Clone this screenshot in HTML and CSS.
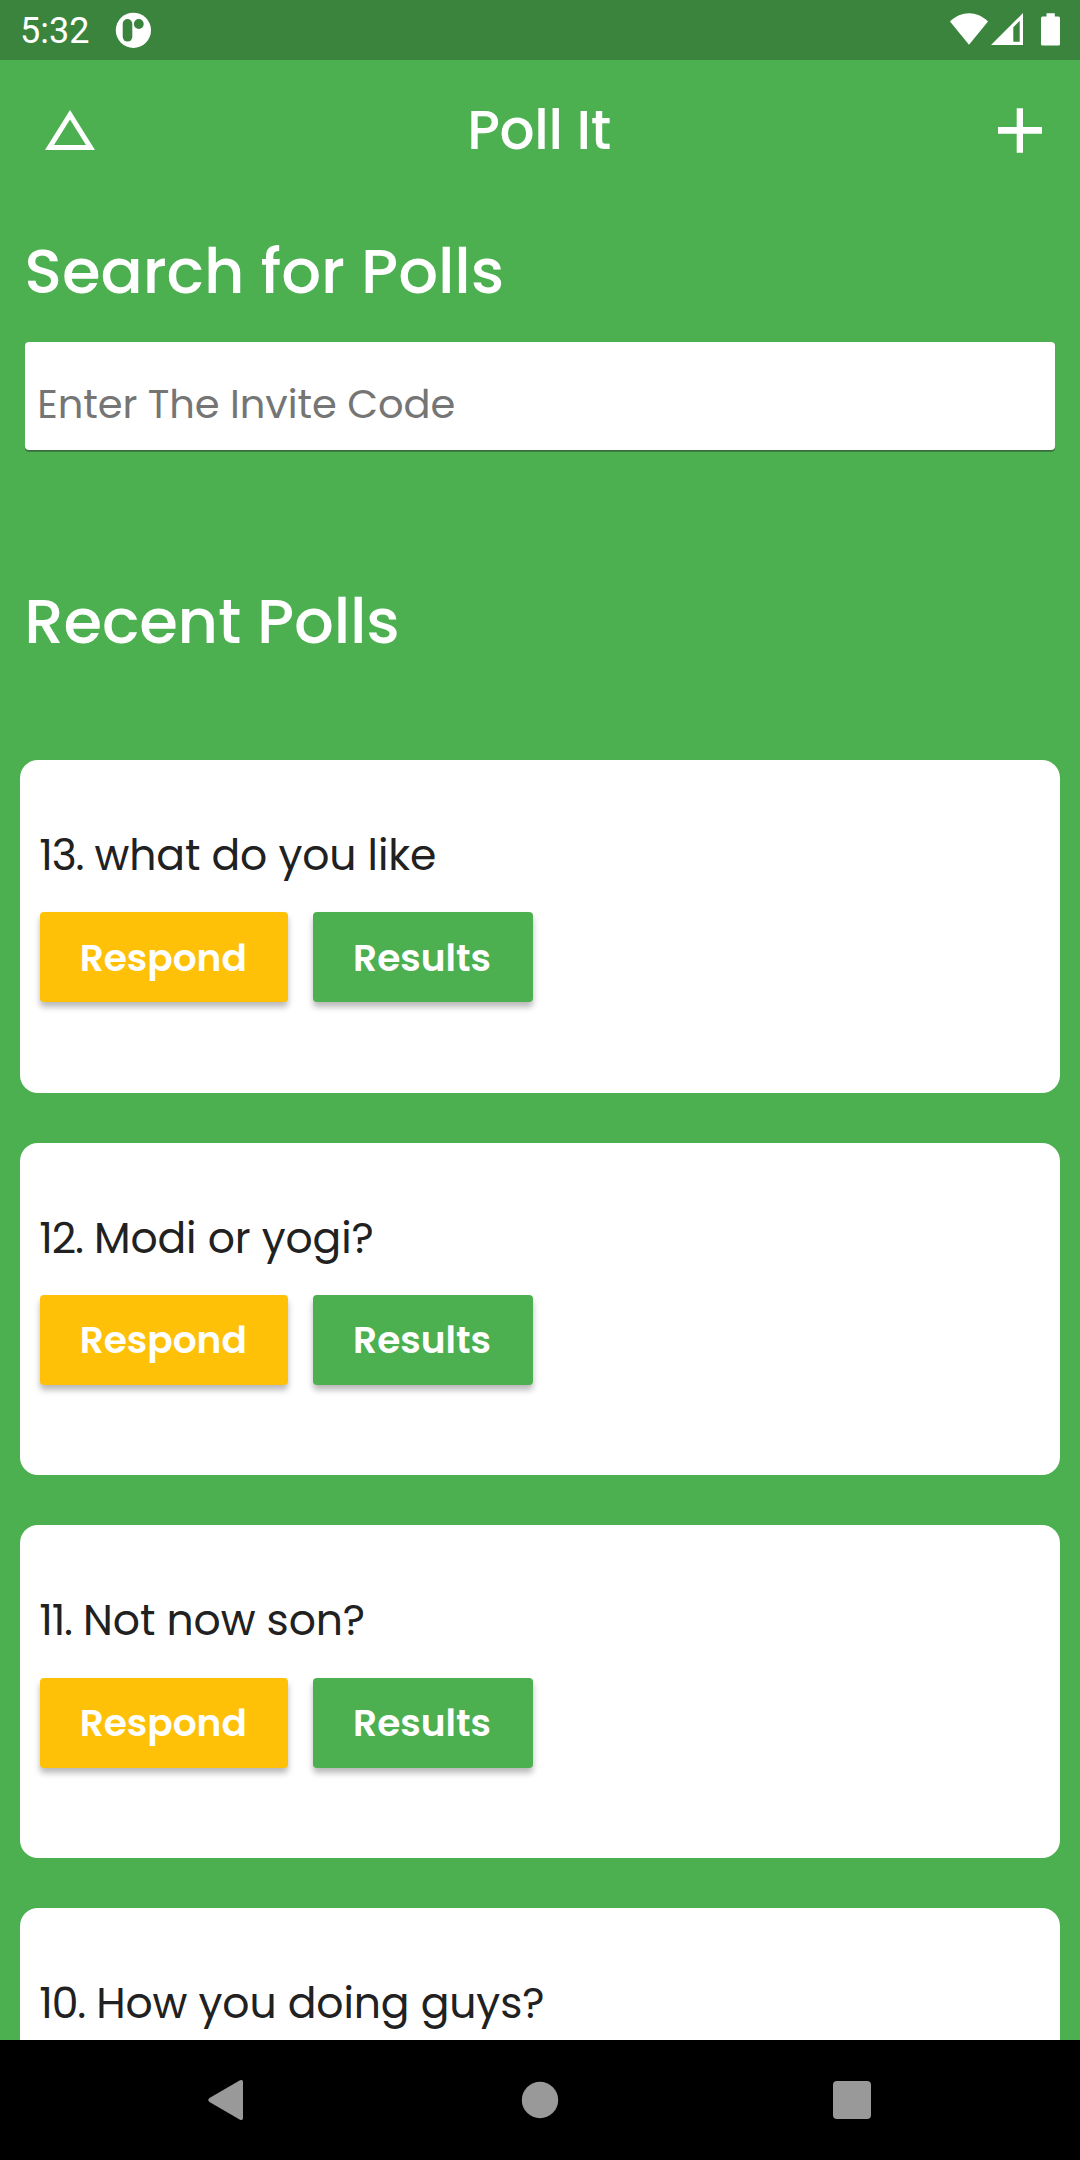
FILE: index.html
```html
<!DOCTYPE html>
<html lang="en">
<head>
<meta charset="utf-8">
<title>Poll It</title>
<link rel="stylesheet" href="styles.css">
</head>
<body>
<header class="status">
  <span class="clock">5:32</span>
  <svg class="notice" width="36" height="36" viewBox="0 0 36 36"><circle cx="18.400" cy="18.300" r="17.600" fill="#fff"/><rect x="7.700" y="7" width="9.600" height="22.600" rx="4.800" fill="#3b843d"/><circle cx="23.800" cy="12" r="4.900" fill="#3b843d"/></svg>
  <svg class="signals" width="112" height="36" viewBox="0 0 112 36" fill="#fff"><path d="M0 9.500C11-1.500 27-1.500 38 9.500L19 32.700Z"/><path fill-rule="evenodd" d="M41 32.900 73 1V32.900ZM63.300 15.300V29.700H69.700V8.800Z"/><path d="M92.500 4.500H96.500V1.300H104.800V4.500H108.500Q110 4.500 110 6V32Q110 33.500 108.500 33.500H92.500Q91 33.500 91 32V6Q91 4.500 92.500 4.500Z"/></svg>
</header>
<nav class="appbar">
  <svg width="50" height="40" viewBox="0 0 50 40"><path fill="#fff" fill-rule="evenodd" d="M25 0 50 40H0ZM25 9.500 9 35H41Z"/></svg>
  <h1 class="title">Poll It</h1>
  <svg width="44" height="46" viewBox="0 0 44 46"><path fill="#fff" d="M18.700 1.300H25V20H44V26.700H25V45.700H18.700V26.700H0V20H18.700Z"/></svg>
</nav>
<main class="content">
  <h2 class="heading">Search for Polls</h2>
  <div class="field">Enter The Invite Code</div>
  <h2 class="heading recent-heading">Recent Polls</h2>
  <div class="polls">
    <section class="card">
      <p class="question"><span class="num">13.</span> what do you like</p>
      <div class="actions"><button class="btn respond">Respond</button><button class="btn results">Results</button></div>
    </section>
    <section class="card">
      <p class="question"><span class="num">12.</span> Modi or yogi?</p>
      <div class="actions"><button class="btn respond">Respond</button><button class="btn results">Results</button></div>
    </section>
    <section class="card">
      <p class="question"><span class="num">11.</span> Not now son?</p>
      <div class="actions"><button class="btn respond">Respond</button><button class="btn results">Results</button></div>
    </section>
    <section class="card">
      <p class="question"><span class="num">10.</span> How you doing guys?</p>
    </section>
  </div>
</main>
<footer class="navbar">
  <svg width="39" height="42" viewBox="0 0 39 42"><path fill="#999" d="M32 1.300Q35 0 35 3V39Q35 42 32 40.700L1.500 23Q-1 21 1.500 19Z"/></svg>
  <svg width="38" height="38" viewBox="0 0 38 38"><circle cx="19" cy="19" r="18.200" fill="#999"/></svg>
  <svg width="38" height="38" viewBox="0 0 38 38"><rect width="38" height="38" rx="4" fill="#999"/></svg>
</footer>
</body>
</html>
```
FILE: styles.css
```css
* { box-sizing: border-box; }
body {
  margin: 0;
  width: 1080px;
  height: 2160px;
  display: flex;
  flex-direction: column;
  overflow: hidden;
  background: #4caf50;
  color: #fff;
  font-family: Poppins, Inter, sans-serif;
}
svg { display: block; flex: none; }
h1, h2, p { margin: 0; font-weight: 500; }
.status {
  height: 60px;
  flex: none;
  display: flex;
  align-items: center;
  padding: 0 18px 0 20px;
  background: #3b843d;
}
.clock { font: 36px/60px Roboto, sans-serif; width: 95px; padding-top: 2px; }
.signals { margin-left: auto; }
.appbar {
  height: 140px;
  flex: none;
  display: grid;
  grid-template-columns: 50px 1fr 44px;
  align-items: center;
  padding: 0 38px 0 45px;
}
.title {
  font-size: 55px;
  line-height: 80px;
  letter-spacing: -.35px;
  text-align: center;
  padding: 0 15px 1px 0;
}
.content { flex: 1; min-height: 0; overflow: hidden; padding: 26px 20px 0; }
.heading { font-size: 62.5px; line-height: 90px; padding-left: 4.3px; letter-spacing: -.1px; }
.field {
  margin: 26.3px 5px 0;
  height: 107.7px;
  border-radius: 4px;
  background: #fff;
  box-shadow: 0 1.7px 0 #3a6d3c;
  color: #757575;
  font-size: 40px;
  letter-spacing: -.1px;
  line-height: 60px;
  padding: 31.4px 12.3px 0;
}
.recent-heading { margin-top: 126px; letter-spacing: -.2px; }
.polls { display: flex; flex-direction: column; gap: 50px; padding-top: 94px; }
.card {
  height: 332.6px;
  flex: none;
  padding: 65px 20px 0;
  border-radius: 18px;
  background: #fff;
}
.question {
  margin-left: -.7px;
  font-size: 42.5px;
  font-weight: 400;
  line-height: 60px;
  letter-spacing: -.12px;
  color: #212121;
}
.num { letter-spacing: -1.2px; }
.actions { display: flex; gap: 25px; padding-top: 27.4px; }
.btn {
  height: 90px;
  border: 0;
  padding: 1px 1px 0 0;
  border-radius: 4px;
  color: #fff;
  font: inherit;
  font-size: 37.5px;
  font-weight: 600;
  box-shadow: 0 5px 6px rgba(0, 0, 0, .28);
}
.respond { width: 247.5px; background: #ffc107; }
.results { width: 220px; background: #4caf50; }
.navbar {
  height: 120px;
  flex: none;
  display: flex;
  align-items: center;
  justify-content: space-between;
  padding: 0 209px 0 208px;
  background: #000;
}
```
